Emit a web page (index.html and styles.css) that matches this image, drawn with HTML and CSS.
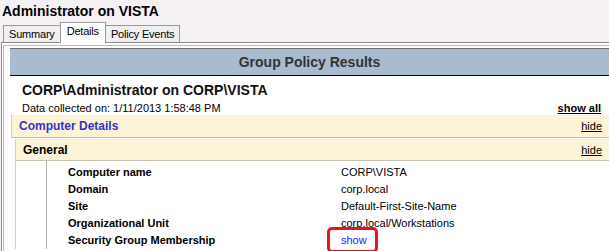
FILE: index.html
```html
<!DOCTYPE html>
<html>

<head>
    <title>Administrator on VISTA</title>
    <link rel="stylesheet" href="styles.css">
</head>

<body>
    <h1 class="title">Administrator on VISTA</h1>

    <div class="tabs">
        <div class="tab">Summary</div>
        <div class="tab active">Details</div>
        <div class="tab">Policy Events</div>
    </div>

    <div class="panel">
        <div class="frame">
            <div class="gp-head">Group Policy Results</div>

            <div class="summary">
                <div class="who">CORP\Administrator on CORP\VISTA</div>
                <div class="collected">
                    <span>Data collected on: 1/11/2013 1:58:48 PM</span>
                    <a class="show-all" href="#">show all</a>
                </div>
            </div>

            <div class="band band-main">
                <span class="band-title">Computer Details</span>
                <a class="toggle" href="#">hide</a>
            </div>

            <div class="sub">
                <div class="band band-sub">
                    <span class="band-title">General</span>
                    <a class="toggle" href="#">hide</a>
                </div>

                <div class="rows">
                    <div class="row">
                        <span class="label">Computer name</span>
                        <span class="value">CORP\VISTA</span>
                    </div>
                    <div class="row">
                        <span class="label">Domain</span>
                        <span class="value">corp.local</span>
                    </div>
                    <div class="row">
                        <span class="label">Site</span>
                        <span class="value">Default-First-Site-Name</span>
                    </div>
                    <div class="row">
                        <span class="label">Organizational Unit</span>
                        <span class="value">corp.local/Workstations</span>
                    </div>
                    <div class="row">
                        <span class="label">Security Group Membership</span>
                        <span class="value"><a class="show-link" href="#">show</a></span>
                    </div>
                </div>
            </div>
        </div>
    </div>
</body>

</html>
```

FILE: styles.css
```css
body {
    margin: 0;
    height: 251px;
    overflow: hidden;
    background-color: #f5f1f5;
    font-family: "Liberation Sans", Arial, sans-serif;
    color: #000;
}

a {
    color: #000;
}

.title {
    margin: 0;
    padding: 3px 0 0 2px;
    height: 19px;
    font-size: 14px;
    line-height: 16px;
    font-weight: bold;
}

.tabs {
    display: flex;
    align-items: flex-end;
    height: 20px;
    padding-left: 3px;
}

.tab {
    height: 17px;
    padding: 0 5px;
    border: 1px solid #9a9a9a;
    border-bottom: none;
    background-color: #f0f0f0;
    font-size: 11px;
    line-height: 17px;
    letter-spacing: -0.2px;
    box-sizing: border-box;
}

.tab + .tab {
    margin-left: -1px;
}

.tab.active {
    height: 21px;
    margin-bottom: -1px;
    padding: 0 6px;
    background-color: #fff;
    line-height: 17px;
    position: relative;
    z-index: 1;
}

.panel {
    height: 206px;
    margin-left: 1px;
    padding: 2px 0 0 1px;
    border-top: 1px solid #8c8c8c;
    border-left: 1px solid #8c8c8c;
    background-color: #fff;
    overflow: hidden;
}

.frame {
    height: 100%;
    padding: 2px 0 0 6px;
    border-top: 1px solid #b9b9b9;
    border-left: 1px solid #b9b9b9;
}

.gp-head {
    height: 26px;
    border-top: 1px solid #707070;
    border-bottom: 1px solid #000;
    background-color: #a8bbcf;
    color: #333;
    font-size: 14px;
    font-weight: bold;
    line-height: 26px;
    text-align: center;
}

.summary {
    padding: 6px 0 0 12px;
}

.who {
    font-size: 14px;
    font-weight: bold;
    line-height: 16px;
    color: #111;
}

.collected {
    display: flex;
    justify-content: space-between;
    margin-top: 4px;
    font-size: 11px;
    line-height: 13px;
}

.show-all {
    padding-right: 8px;
    font-weight: bold;
}

.band {
    display: flex;
    justify-content: space-between;
    align-items: center;
    background-color: #fdf3d6;
    border-left: 1px solid #d7cfbd;
    border-bottom: 1px solid #c9c2b3;
}

.band-main {
    height: 22px;
    margin-left: 1px;
    padding-left: 7px;
}

.band-main .band-title {
    color: #3333cc;
    font-size: 12px;
    font-weight: bold;
}

.sub {
    margin-left: 5px;
    border-left: 1px solid #d7cfbd;
}

.band-sub {
    height: 21px;
    margin-top: 1px;
    padding-left: 7px;
    border-left: none;
}

.band-sub .band-title {
    font-size: 12px;
    font-weight: bold;
}

.toggle {
    padding-right: 7px;
    font-size: 11px;
}

.rows {
    margin-left: 30px;
    padding: 3px 0 0 21px;
    border-left: 1px solid #b0b0b0;
}

.row {
    display: flex;
    height: 17px;
    font-size: 11px;
    line-height: 17px;
}

.label {
    width: 272px;
    font-weight: bold;
}

.value {
    padding-left: 1px;
}

.show-link {
    color: #1a1aff;
    text-decoration: none;
    position: relative;
}

.show-link::after {
    content: "";
    position: absolute;
    left: -14px;
    right: -11px;
    top: -7px;
    bottom: -7px;
    border: 3px solid #e8141c;
    border-radius: 5px;
}
```
